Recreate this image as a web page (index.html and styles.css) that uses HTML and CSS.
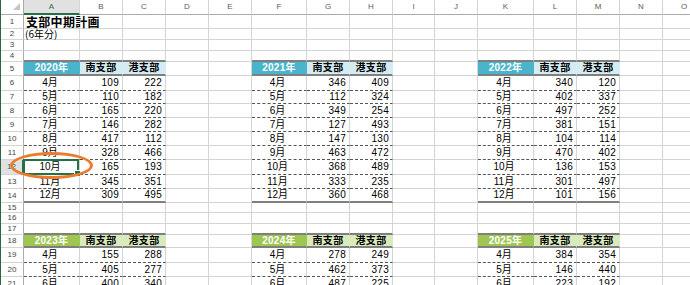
FILE: index.html
```html
<!DOCTYPE html>
<html lang="ja">
<head>
<meta charset="utf-8">
<title>支部中期計画</title>
<link rel="stylesheet" href="styles.css">
</head>
<body>
<div class="sheet">
  <!-- column headers -->
  <div class="corner"><svg class="tri" width="7" height="7" viewBox="0 0 7 7"><polygon points="7,0 7,7 0,7" fill="#c6c6c6"/></svg></div>
  <div class="ch on">A</div><div class="ch">B</div><div class="ch">C</div><div class="ch">D</div><div class="ch">E</div><div class="ch">F</div><div class="ch">G</div><div class="ch">H</div><div class="ch">I</div><div class="ch">J</div><div class="ch">K</div><div class="ch">L</div><div class="ch">M</div><div class="ch">N</div><div class="ch">O</div>

  <!-- row 1 -->
  <div class="rh">1</div><div class="title">支部中期計画</div><div></div><div></div><div></div><div></div><div></div><div></div><div></div><div></div><div></div><div></div><div></div><div></div><div></div>
  <!-- row 2 -->
  <div class="rh">2</div><div class="sub">(6年分)</div><div></div><div></div><div></div><div></div><div></div><div></div><div></div><div></div><div></div><div></div><div></div><div></div><div></div><div></div>
  <!-- row 3 -->
  <div class="rh">3</div><div></div><div></div><div></div><div></div><div></div><div></div><div></div><div></div><div></div><div></div><div></div><div></div><div></div><div></div><div></div>
  <!-- row 4 -->
  <div class="rh">4</div><div class="tt"></div><div class="tt"></div><div class="tt"></div><div></div><div></div><div class="tt"></div><div class="tt"></div><div class="tt"></div><div></div><div></div><div class="tt"></div><div class="tt"></div><div class="tt"></div><div></div><div></div>
  <!-- row 5 -->
  <div class="rh">5</div><div class="hy blue">2020年</div><div class="hl lblue">南支部</div><div class="hl lblue">港支部</div><div></div><div></div><div class="hy blue">2021年</div><div class="hl lblue">南支部</div><div class="hl lblue">港支部</div><div></div><div></div><div class="hy blue">2022年</div><div class="hl lblue">南支部</div><div class="hl lblue">港支部</div><div></div><div></div>
  <!-- row 6 -->
  <div class="rh">6</div><div class="m">4月</div><div class="n">109</div><div class="n">222</div><div></div><div></div><div class="m">4月</div><div class="n">346</div><div class="n">409</div><div></div><div></div><div class="m">4月</div><div class="n">340</div><div class="n">120</div><div></div><div></div>
  <!-- row 7 -->
  <div class="rh">7</div><div class="m">5月</div><div class="n">110</div><div class="n">182</div><div></div><div></div><div class="m">5月</div><div class="n">112</div><div class="n">324</div><div></div><div></div><div class="m">5月</div><div class="n">402</div><div class="n">337</div><div></div><div></div>
  <!-- row 8 -->
  <div class="rh">8</div><div class="m">6月</div><div class="n">165</div><div class="n">220</div><div></div><div></div><div class="m">6月</div><div class="n">349</div><div class="n">254</div><div></div><div></div><div class="m">6月</div><div class="n">497</div><div class="n">252</div><div></div><div></div>
  <!-- row 9 -->
  <div class="rh">9</div><div class="m">7月</div><div class="n">146</div><div class="n">282</div><div></div><div></div><div class="m">7月</div><div class="n">127</div><div class="n">493</div><div></div><div></div><div class="m">7月</div><div class="n">381</div><div class="n">151</div><div></div><div></div>
  <!-- row 10 -->
  <div class="rh">10</div><div class="m">8月</div><div class="n">417</div><div class="n">112</div><div></div><div></div><div class="m">8月</div><div class="n">147</div><div class="n">130</div><div></div><div></div><div class="m">8月</div><div class="n">104</div><div class="n">114</div><div></div><div></div>
  <!-- row 11 -->
  <div class="rh">11</div><div class="m">9月</div><div class="n">328</div><div class="n">466</div><div></div><div></div><div class="m">9月</div><div class="n">463</div><div class="n">472</div><div></div><div></div><div class="m">9月</div><div class="n">470</div><div class="n">402</div><div></div><div></div>
  <!-- row 12 -->
  <div class="rh on">12</div><div class="m cur">10月<span class="sel"><span class="fh"></span></span></div><div class="n">165</div><div class="n">193</div><div></div><div></div><div class="m">10月</div><div class="n">368</div><div class="n">489</div><div></div><div></div><div class="m">10月</div><div class="n">136</div><div class="n">153</div><div></div><div></div>
  <!-- row 13 -->
  <div class="rh">13</div><div class="m">11月</div><div class="n">345</div><div class="n">351</div><div></div><div></div><div class="m">11月</div><div class="n">333</div><div class="n">235</div><div></div><div></div><div class="m">11月</div><div class="n">301</div><div class="n">497</div><div></div><div></div>
  <!-- row 14 -->
  <div class="rh">14</div><div class="m e">12月</div><div class="n e">309</div><div class="n e">495</div><div></div><div></div><div class="m e">12月</div><div class="n e">360</div><div class="n e">468</div><div></div><div></div><div class="m e">12月</div><div class="n e">101</div><div class="n e">156</div><div></div><div></div>
  <!-- row 15 -->
  <div class="rh">15</div><div></div><div></div><div></div><div></div><div></div><div></div><div></div><div></div><div></div><div></div><div></div><div></div><div></div><div></div><div></div>
  <!-- row 16 -->
  <div class="rh">16</div><div></div><div></div><div></div><div></div><div></div><div></div><div></div><div></div><div></div><div></div><div></div><div></div><div></div><div></div><div></div>
  <!-- row 17 -->
  <div class="rh">17</div><div class="tt"></div><div class="tt"></div><div class="tt"></div><div></div><div></div><div class="tt"></div><div class="tt"></div><div class="tt"></div><div></div><div></div><div class="tt"></div><div class="tt"></div><div class="tt"></div><div></div><div></div>
  <!-- row 18 -->
  <div class="rh">18</div><div class="hy green">2023年</div><div class="hl lgreen">南支部</div><div class="hl lgreen">港支部</div><div></div><div></div><div class="hy green">2024年</div><div class="hl lgreen">南支部</div><div class="hl lgreen">港支部</div><div></div><div></div><div class="hy green">2025年</div><div class="hl lgreen">南支部</div><div class="hl lgreen">港支部</div><div></div><div></div>
  <!-- row 19 -->
  <div class="rh">19</div><div class="m">4月</div><div class="n">155</div><div class="n">288</div><div></div><div></div><div class="m">4月</div><div class="n">278</div><div class="n">249</div><div></div><div></div><div class="m">4月</div><div class="n">384</div><div class="n">354</div><div></div><div></div>
  <!-- row 20 -->
  <div class="rh">20</div><div class="m">5月</div><div class="n">405</div><div class="n">277</div><div></div><div></div><div class="m">5月</div><div class="n">462</div><div class="n">373</div><div></div><div></div><div class="m">5月</div><div class="n">146</div><div class="n">440</div><div></div><div></div>
  <!-- row 21 -->
  <div class="rh">21</div><div class="m">6月</div><div class="n">400</div><div class="n">340</div><div></div><div></div><div class="m">6月</div><div class="n">487</div><div class="n">225</div><div></div><div></div><div class="m">6月</div><div class="n">223</div><div class="n">192</div><div></div><div></div>

  <span class="ring"></span>
</div>
</body>
</html>
```

FILE: styles.css
```css
html, body {
  margin: 0;
  padding: 0;
  background: #ffffff;
  overflow: hidden;
}

.sheet {
  position: relative;
  display: grid;
  grid-template-columns: 23px 56px 43px 43px 43px 43px 55px 43px 43px 42px 43px 56px 43px 43px 43px 43px;
  grid-template-rows: 15px 14px 11px 11px 11px 14px 15px 13px 14px 14px 14px 14px 15px 14px 14px 10px 11px 11px 13px 15px 14px 14px;
  width: max-content;
  border-left: 1px solid #2f6446;
  font-family: "Liberation Sans", "Noto Sans CJK JP", sans-serif;
  font-size: 10px;
  color: #000000;
}

.sheet > div {
  box-sizing: border-box;
  border-right: 1px solid #d4d4d4;
  border-bottom: 1px solid #d4d4d4;
  display: flex;
  align-items: center;
  white-space: nowrap;
  min-width: 0;
  line-height: 1;
}

/* headers */
.sheet > .corner {
  justify-content: flex-end;
  align-items: flex-end;
  padding: 0 3px 4px 0;
  border-right-color: #ababab;
  border-bottom-color: #ababab;
}
.tri { display: block; }

.sheet > .ch {
  justify-content: center;
  font-size: 8px;
  color: #5a5a5a;
  border-bottom-color: #ababab;
}
.sheet > .ch.on {
  background: #e1e1e1;
  color: #217346;
  border-bottom: 2px solid #217346;
}

.sheet > .rh {
  justify-content: center;
  font-size: 8px;
  color: #444444;
  border-right-color: #ababab;
}
.sheet > .rh.on {
  background: #e1e1e1;
  color: #217346;
  border-right: 2px solid #217346;
}

/* title */
.sheet > .title {
  grid-column: span 2;
  font-family: "Noto Sans CJK JP", sans-serif;
  font-weight: bold;
  font-size: 12px;
  letter-spacing: 0.3px;
  padding-left: 2px;
  padding-top: 1px;
}
.sheet > .sub {
  font-family: "Noto Sans CJK JP", sans-serif;
  font-size: 10px;
  padding-left: 1px;
}

/* table borders */
.sheet > .tt {
  border-bottom: 2px solid #7f7f7f;
}

.sheet > .hy,
.sheet > .hl {
  justify-content: center;
  font-weight: bold;
  border-right-color: transparent;
  border-bottom: 2px solid #7f7f7f;
  letter-spacing: 0.3px;
}
.sheet > .hy { color: #ffffff; }
.sheet > .blue { background: #4bb4cd; }
.sheet > .lblue { background: #d4ecf2; }
.sheet > .green { background: #9fc651; }
.sheet > .lgreen { background: #d9ebbd; }

.sheet > .m {
  justify-content: center;
  padding-right: 3px;
  border-bottom: 1px dashed #555555;
}
.sheet > .n {
  justify-content: flex-end;
  padding-right: 3px;
  letter-spacing: 0.3px;
  border-bottom: 1px dashed #555555;
}
.sheet > .e {
  border-bottom: 2px solid #7f7f7f;
}

/* active cell */
.sheet > .cur {
  position: relative;
}
.sel {
  position: absolute;
  left: -1px;
  top: -1px;
  right: 0;
  bottom: -1px;
  border: 2px solid #217346;
}
.fh {
  position: absolute;
  right: -4px;
  bottom: -4px;
  width: 5px;
  height: 5px;
  background: #217346;
  border: 1px solid #ffffff;
}

/* orange annotation ring */
.ring {
  position: absolute;
  left: 9px;
  top: 152px;
  width: 83px;
  height: 27px;
  box-sizing: border-box;
  border: 3px solid #ee7a30;
  border-radius: 50%;
}
```
